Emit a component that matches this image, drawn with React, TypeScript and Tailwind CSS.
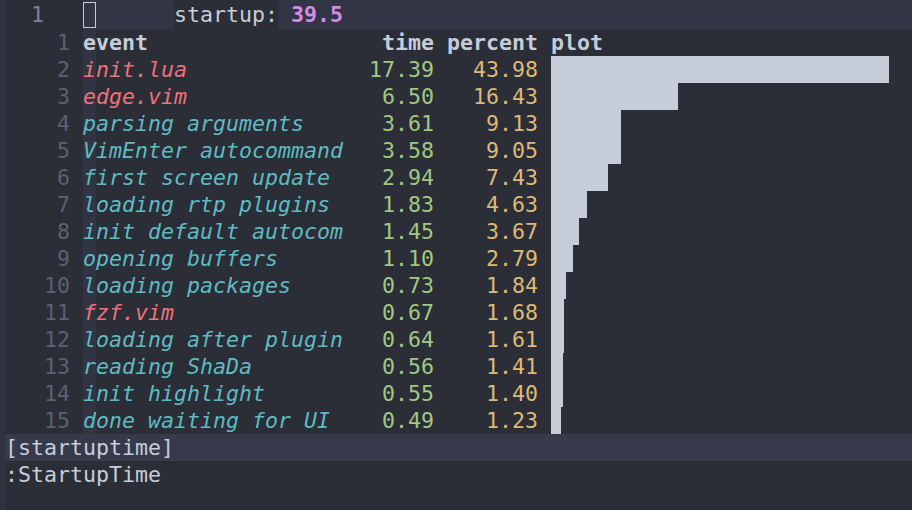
const rows = [
  { n: 2, ev: "init.lua", t: "17.39", p: "43.98", c: "text-[#ec7279]", bar: 338 },
  { n: 3, ev: "edge.vim", t: "6.50", p: "16.43", c: "text-[#ec7279]", bar: 127 },
  { n: 4, ev: "parsing arguments", t: "3.61", p: "9.13", c: "text-[#5dbbc1]", bar: 70 },
  { n: 5, ev: "VimEnter autocommand", t: "3.58", p: "9.05", c: "text-[#5dbbc1]", bar: 70 },
  { n: 6, ev: "first screen update", t: "2.94", p: "7.43", c: "text-[#5dbbc1]", bar: 57 },
  { n: 7, ev: "loading rtp plugins", t: "1.83", p: "4.63", c: "text-[#5dbbc1]", bar: 36 },
  { n: 8, ev: "init default autocom", t: "1.45", p: "3.67", c: "text-[#5dbbc1]", bar: 28 },
  { n: 9, ev: "opening buffers", t: "1.10", p: "2.79", c: "text-[#5dbbc1]", bar: 22 },
  { n: 10, ev: "loading packages", t: "0.73", p: "1.84", c: "text-[#5dbbc1]", bar: 15 },
  { n: 11, ev: "fzf.vim", t: "0.67", p: "1.68", c: "text-[#ec7279]", bar: 13 },
  { n: 12, ev: "loading after plugin", t: "0.64", p: "1.61", c: "text-[#5dbbc1]", bar: 13 },
  { n: 13, ev: "reading ShaDa", t: "0.56", p: "1.41", c: "text-[#5dbbc1]", bar: 12 },
  { n: 14, ev: "init highlight", t: "0.55", p: "1.40", c: "text-[#5dbbc1]", bar: 12 },
  { n: 15, ev: "done waiting for UI", t: "0.49", p: "1.23", c: "text-[#5dbbc1]", bar: 10 },
];

function Gutter({ n }: { n: number }) {
  return (
    <div className="w-[78px] flex shrink-0">
      <span className="w-[65px] text-right text-[#5c6073]">{n}</span>
    </div>
  );
}

// first cell of each row sits in the cursor column
function Event({ text, className }: { text: string; className: string }) {
  return (
    <span className={`w-[260px] flex h-full ${className}`}>
      <span className="w-[13px] h-full bg-[#313442]">{text[0]}</span>
      <span>{text.slice(1)}</span>
    </span>
  );
}

export default function App() {
  return (
    <div
      className="w-[912px] h-[510px] overflow-hidden flex bg-[#2b2d37] text-[#c5cdd9] text-[21.6px] leading-[27px] whitespace-pre"
      style={{ fontFamily: '"DejaVu Sans Mono", "Liberation Mono", monospace' }}
    >
      <div className="w-[5px] shrink-0 bg-[#30333f]" />
      <div className="flex-1 flex flex-col min-w-0">
        {/* top window, cursor line */}
        <div className="h-[29px] flex items-center shrink-0">
          <div className="w-[78px] h-full flex items-center shrink-0">
            <span className="w-[39px] text-right text-[#7d8497]">1</span>
          </div>
          <div className="flex-1 h-full flex items-center bg-[#323544]">
            <span className="w-[13px] h-[26px] border-[1.5px] border-[#c5cdd9] mt-[1px]" />
            <span className="w-[78px]" />
            <span className="h-full flex items-center bg-[#2b2d37]">startup:</span>
            <span> </span>
            <span className="font-bold text-[#d38aea]">39.5</span>
          </div>
        </div>

        {/* startuptime window */}
        <div className="flex flex-col shrink-0">
          <div className="h-[27px] flex">
            <Gutter n={1} />
            <div className="flex font-bold">
              <Event text="event" className="" />
              <span className="w-[91px] text-right">time</span>
              <span className="w-[104px] text-right">percent</span>
              <span className="ml-[13px]">plot</span>
            </div>
          </div>
          {rows.map((r) => (
            <div key={r.n} className="h-[27px] flex">
              <Gutter n={r.n} />
              <Event text={r.ev} className={`italic ${r.c}`} />
              <span className="w-[91px] text-right text-[#a0c980]">{r.t}</span>
              <span className="w-[104px] text-right text-[#deb974]">{r.p}</span>
              <span className="ml-[13px] h-full bg-[#c5cdd9]" style={{ width: r.bar }} />
            </div>
          ))}
        </div>

        {/* status line */}
        <div className="h-[27px] bg-[#363a4b] shrink-0">[startuptime]</div>
        {/* command line */}
        <div className="h-[27px] shrink-0">:StartupTime</div>
        <div className="flex-1" />
      </div>
    </div>
  );
}
